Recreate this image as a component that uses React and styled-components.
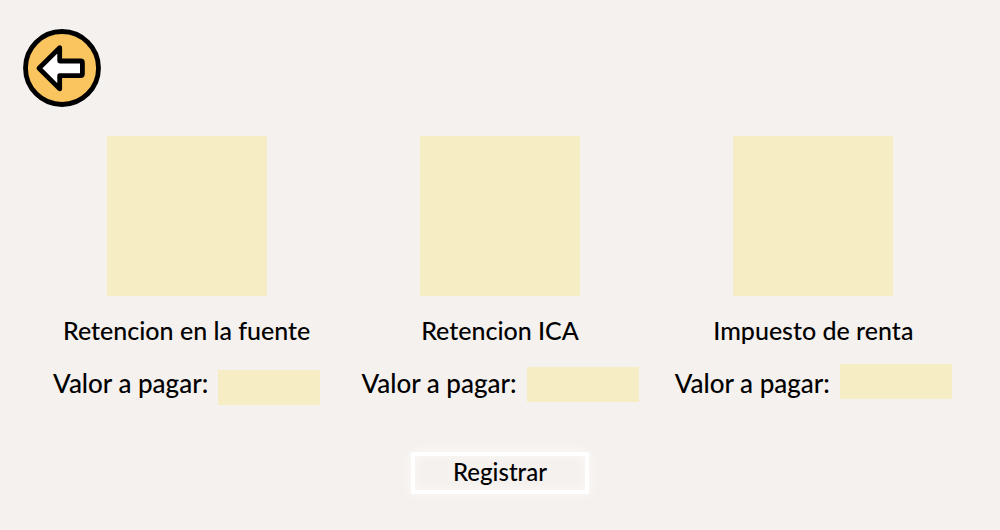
import React from "react";
import styled, { createGlobalStyle } from "styled-components";

const GlobalStyle = createGlobalStyle`
  *, *::before, *::after { box-sizing: border-box; }
  body {
    margin: 0;
    background: #f5f1ee;
    color: #000;
    font-family: Lato, "Liberation Sans", sans-serif;
    font-weight: 500;
  }
`;

const Page = styled.div`
  display: flex;
  flex-direction: column;
  min-height: 100vh;
`;

const Header = styled.header`
  padding: 29px 23px;
`;

const BackButton = styled.button`
  display: block;
  width: 78px;
  height: 78px;
  padding: 0;
  border: 0;
  border-radius: 50%;
  background: none;
  cursor: pointer;

  svg { display: block; }
`;

const Form = styled.form`
  display: flex;
  flex-direction: column;
  align-items: center;
  padding: 0 30px;
`;

const TaxGrid = styled.div`
  display: grid;
  grid-template-columns: repeat(3, minmax(0, 1fr));
  width: 100%;
`;

const TaxCard = styled.section`
  display: flex;
  flex-direction: column;
  align-items: center;
`;

const Tile = styled.div`
  width: 160px;
  height: 160px;
  background: #f6edc5;
`;

const Title = styled.h2`
  margin: 19px 0;
  font-size: 25px;
  font-weight: 500;
  line-height: 30px;
  white-space: nowrap;
`;

const FieldRow = styled.div`
  display: flex;
  align-items: flex-start;
  gap: 10px;
  height: 41px;
`;

const Label = styled.label`
  font-size: 26px;
  line-height: 38px;
  white-space: nowrap;
`;

const AmountInput = styled.input`
  align-self: ${({ $align }) => $align};
  width: ${({ $width }) => $width}px;
  height: 35px;
  padding: 0 8px;
  border: 0;
  border-radius: 0;
  background: #f6edc5;
  font: inherit;
  font-size: 20px;
`;

const SubmitButton = styled.button`
  width: 178px;
  height: 42px;
  margin-top: 47px;
  padding: 0 0 2px;
  border: 4px solid #fff;
  background: transparent;
  box-shadow: 0 0 10px rgba(255, 255, 255, 0.7), inset 0 0 10px rgba(255, 255, 255, 0.6);
  color: inherit;
  font: inherit;
  font-size: 24px;
  line-height: 30px;
  cursor: pointer;
`;

const taxes = [
  { id: "fuente", title: "Retencion en la fuente", width: 102, align: "flex-end" },
  { id: "ica", title: "Retencion ICA", width: 112, align: "center" },
  { id: "renta", title: "Impuesto de renta", width: 112, align: "flex-start" },
];

function BackIcon() {
  return (
    <svg width="78" height="78" viewBox="0 0 78 78" aria-hidden="true">
      <circle cx="39" cy="39" r="36.5" fill="#fac45f" stroke="#000" strokeWidth="4.8" />
      <path
        d="M16 39.3 L36.7 18.7 V32 H57.6 Q59.4 32 59.4 33.8 V44.8 Q59.4 46.6 57.6 46.6 H36.7 V59.9 Z"
        fill="#fff"
        stroke="#000"
        strokeWidth="4.8"
        strokeLinejoin="round"
      />
    </svg>
  );
}

export default function App() {
  return (
    <Page>
      <GlobalStyle />
      <Header>
        <BackButton type="button" aria-label="Volver">
          <BackIcon />
        </BackButton>
      </Header>
      <Form onSubmit={(event) => event.preventDefault()}>
        <TaxGrid>
          {taxes.map(({ id, title, width, align }) => (
            <TaxCard key={id}>
              <Tile />
              <Title>{title}</Title>
              <FieldRow>
                <Label htmlFor={id}>Valor a pagar:</Label>
                <AmountInput id={id} type="text" inputMode="decimal" $width={width} $align={align} />
              </FieldRow>
            </TaxCard>
          ))}
        </TaxGrid>
        <SubmitButton type="submit">Registrar</SubmitButton>
      </Form>
    </Page>
  );
}
